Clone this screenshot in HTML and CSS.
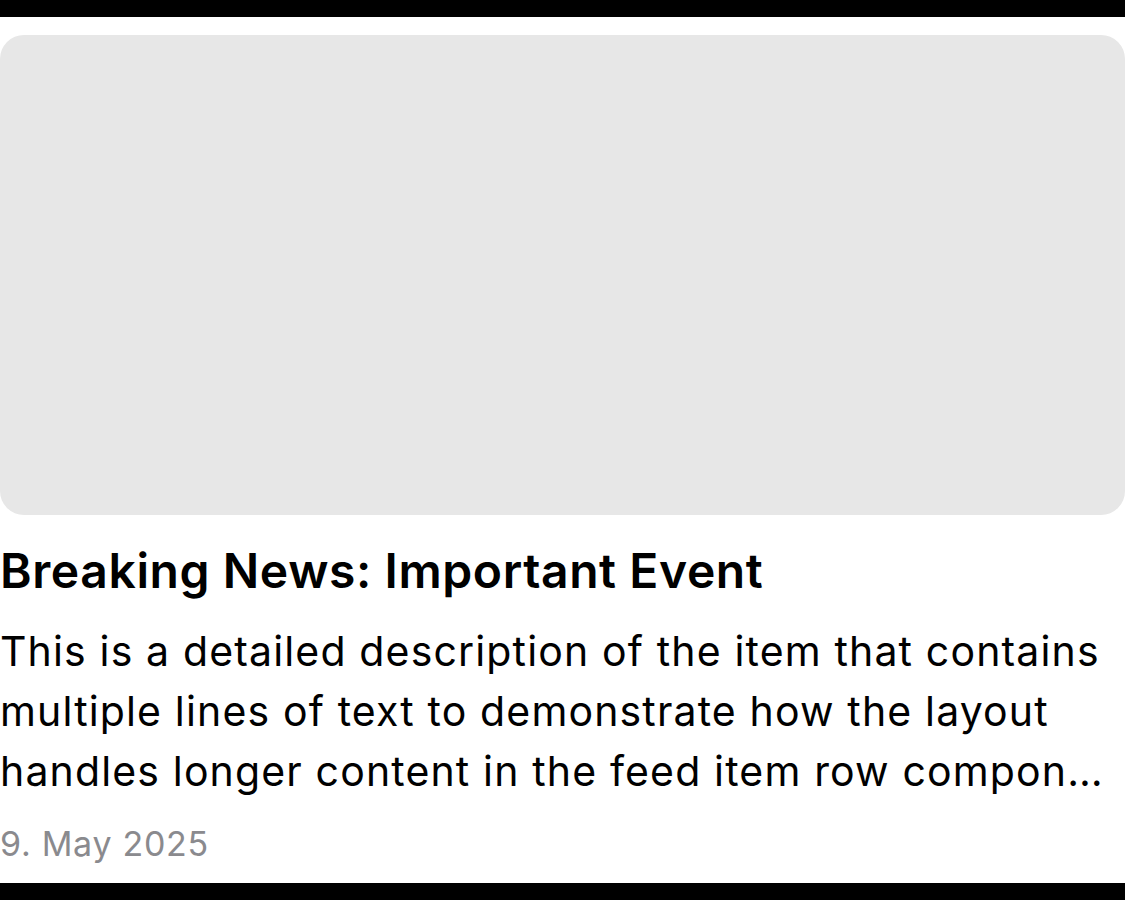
FILE: index.html
```html
<!DOCTYPE html>
<html lang="en">
<head>
<meta charset="utf-8">
<link rel="stylesheet" href="styles.css">
</head>
<body>
<div class="screen">
  <div class="bar"></div>
  <main class="content">
    <article class="feed-item">
      <div class="thumb"></div>
      <h1 class="title">Breaking News: Important Event</h1>
      <p class="desc">This is a detailed description of the item that contains multiple lines of text to demonstrate how the layout handles longer content in the feed item row compon…</p>
      <div class="date">9. May 2025</div>
    </article>
  </main>
  <div class="bar"></div>
</div>
</body>
</html>
```

FILE: styles.css
```css
html, body {
  margin: 0;
  padding: 0;
  background: #fff;
}
body {
  font-family: Inter, "Noto Sans", sans-serif;
  color: #000;
}
.screen {
  width: 1125px;
  height: 900px;
  display: flex;
  flex-direction: column;
  overflow: hidden;
}
.bar {
  height: 17px;
  background: #000;
  flex: none;
}
.content {
  flex: 1;
  padding-top: 18px;
}
.feed-item {
  display: flex;
  flex-direction: column;
}
.thumb {
  height: 480px;
  background: #e7e7e7;
  border-radius: 24px;
}
.title {
  margin: 28px 0 0;
  font-size: 48px;
  font-weight: 600;
  line-height: 56px;
  letter-spacing: 0.6px;
}
.desc {
  margin: 22px 0 0;
  font-size: 41px;
  font-weight: 400;
  line-height: 60px;
  letter-spacing: 1.15px;
  overflow: hidden;
}
.date {
  margin-top: 21px;
  font-size: 34px;
  line-height: 44px;
  letter-spacing: 0.7px;
  color: #8a8a8e;
}
```
